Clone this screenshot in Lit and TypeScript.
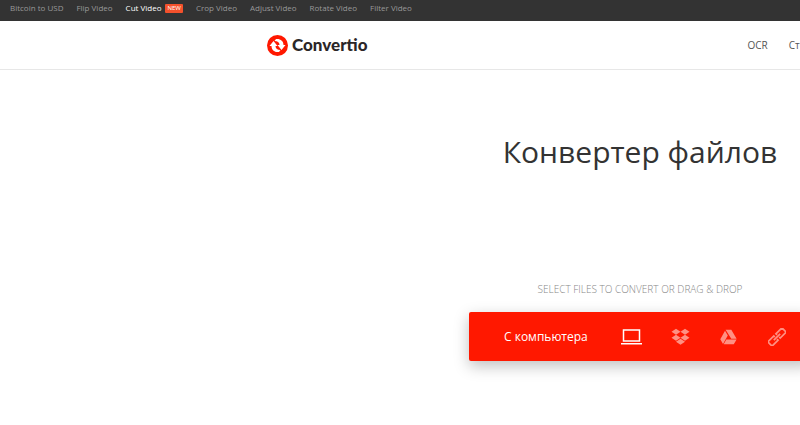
import { LitElement, html, css } from "lit";
import { customElement } from "lit/decorators.js";

const links = ["Bitcoin to USD", "Flip Video", "Cut Video", "Crop Video", "Adjust Video", "Rotate Video", "Filter Video"];

@customElement("top-links")
class TopLinks extends LitElement {
  static styles = css`
    :host { display: block; background: #333; }
    nav { display: flex; gap: 13px; padding: 0 10px; height: 21px; }
    a { display: flex; align-items: center; gap: 4px; height: 16px; color: #999; font-size: 8px; line-height: 16px; text-decoration: none; white-space: nowrap; }
    .current { color: #fff; }
    .badge { background: #f4512c; color: #fff; font-size: 6px; font-weight: 400; line-height: 9px; padding: 0 2px; border-radius: 1px; }
  `;
  render() {
    return html`<nav aria-label="Tools">
      ${links.map((t) => t === "Cut Video"
        ? html`<a class="current" href="#">${t}<span class="badge">NEW</span></a>`
        : html`<a href="#">${t}</a>`)}
    </nav>`;
  }
}

@customElement("site-header")
class SiteHeader extends LitElement {
  static styles = css`
    :host { display: block; border-bottom: 1px solid #e7e7e7; }
    header { display: flex; align-items: center; gap: 380px; height: 48px; width: 746px; margin: 0 auto; }
    a { color: #555; text-decoration: none; white-space: nowrap; }
    .logo { display: flex; align-items: center; gap: 4px; color: #2b2627; font: 900 17px/24px Lato, sans-serif; }
    nav { display: flex; gap: 21px; font-size: 10px; line-height: 16px; }
    svg { display: block; }
  `;
  render() {
    return html`<header>
      <a class="logo" href="#">
        <svg width="21" height="21" viewBox="0 0 42 42" aria-hidden="true">
          <circle cx="21" cy="21" r="21" fill="#ff1800" />
          <g fill="#fff">
            <path id="arrow" d="M5 22 13 12l8 10h-4c0 5 4 8 10 8l-3 4C15 35 9 30 9 22z" />
            <path d="M37 20 29 30l-8-10h4c0-5-4-8-10-8l3-4c9-1 15 4 15 12z" />
          </g>
        </svg>
        <span>Convertio</span>
      </a>
      <nav aria-label="Main"><a href="#">OCR</a><a href="#">Стоимость</a></nav>
    </header>`;
  }
}

@customElement("file-picker")
class FilePicker extends LitElement {
  static styles = css`
    :host { display: flex; flex-direction: column; align-items: center; gap: 15px; }
    p { margin: 0; color: #888; font-size: 10px; font-weight: 300; line-height: 16px; }
    .bar { display: flex; align-items: center; box-sizing: border-box; width: 342px; height: 49px; padding-left: 35px; border-radius: 2px; background: #ff1800; box-shadow: 0 5px 15px rgba(0, 0, 0, 0.25); }
    button { display: flex; align-items: center; justify-content: center; flex: none; width: 48px; height: 49px; margin: 0; padding: 0; border: 0; background: none; color: #fff; font: inherit; cursor: pointer; }
    .local { width: auto; gap: 33px; margin-right: 15px; font-size: 12px; line-height: 16px; white-space: nowrap; }
    .cloud { color: #ff9082; }
    svg { display: block; }
  `;
  render() {
    return html`
      <p>SELECT FILES TO CONVERT OR DRAG &amp; DROP</p>
      <div class="bar">
        <button class="local">С компьютера
          <svg width="21" height="16" viewBox="0 0 21 16" aria-hidden="true">
            <path d="M2.5 1h16v11h-16z" fill="none" stroke="currentColor" stroke-width="1.5" />
            <path d="M0 14h21v1.5H0z" fill="currentColor" />
          </svg>
        </button>
        <button class="cloud" aria-label="Dropbox">
          <svg width="19" height="18" viewBox="0 0 19 18" fill="currentColor" aria-hidden="true">
            <path d="m5 .7 4.500 3L5 6.700 .5 3.700zM14 .7l4.500 3-4.500 3-4.500-3zM5 6.700l4.500 3-4.500 3-4.500-3zM14 6.700l4.500 3-4.500 3-4.500-3zM9.500 10.700l4.500 3-4.500 3-4.500-3z" />
          </svg>
        </button>
        <button class="cloud" aria-label="Google Drive">
          <svg width="17" height="16" viewBox="0 0 17 16" fill="currentColor" aria-hidden="true">
            <path d="M5.600.7h5.700l5.300 9h-5.300zM5 1.700 7.800 6.500 3 15 .3 10.300zM6.300 10.600h10.300L13.800 15.300H3.700z" />
          </svg>
        </button>
        <button class="cloud" aria-label="URL">
          <svg width="18" height="18" viewBox="0 0 18 18" aria-hidden="true">
            <g transform="rotate(-45 9 9)" fill="none" stroke="currentColor" stroke-width="1.700">
              <path d="M7.500 7.500V6H-1v6h8.500v-1.500M10.500 7.500V6H19v6h-8.500v-1.500M4.500 9h9" />
            </g>
          </svg>
        </button>
      </div>`;
  }
}

@customElement("app-root")
class AppRoot extends LitElement {
  static styles = css`
    :host { display: block; overflow: hidden; min-height: 100vh; background: #fff; font-family: "Open Sans", "Noto Sans", sans-serif; }
    .page { min-width: 1280px; }
    main { display: flex; flex-direction: column; align-items: center; gap: 105px; padding: 58px 0; }
    h1 { margin: 0; color: #333; font-size: 30px; font-weight: 400; line-height: 48px; }
  `;
  render() {
    return html`<div class="page">
      <top-links></top-links>
      <site-header></site-header>
      <main>
        <h1>Конвертер файлов</h1>
        <file-picker></file-picker>
      </main>
    </div>`;
  }
}
